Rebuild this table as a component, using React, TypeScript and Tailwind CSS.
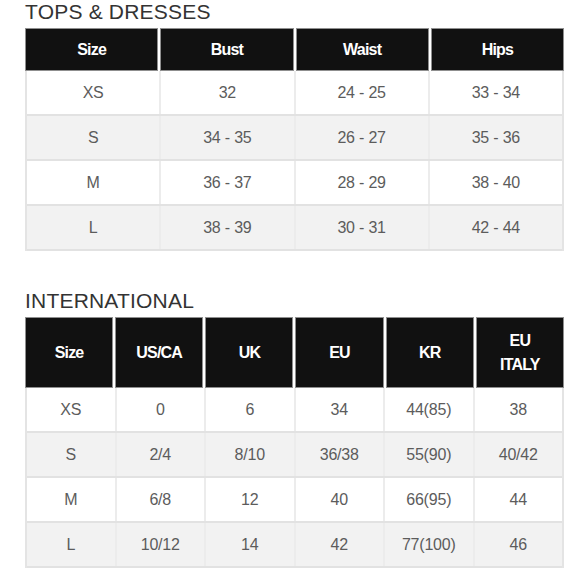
import React from 'react';

const tops = {
  head: ['Size', 'Bust', 'Waist', 'Hips'],
  rows: [
    ['XS', '32', '24 - 25', '33 - 34'],
    ['S', '34 - 35', '26 - 27', '35 - 36'],
    ['M', '36 - 37', '28 - 29', '38 - 40'],
    ['L', '38 - 39', '30 - 31', '42 - 44'],
  ],
};

const intl = {
  head: ['Size', 'US/CA', 'UK', 'EU', 'KR', 'EU\nITALY'],
  rows: [
    ['XS', '0', '6', '34', '44(85)', '38'],
    ['S', '2/4', '8/10', '36/38', '55(90)', '40/42'],
    ['M', '6/8', '12', '40', '66(95)', '44'],
    ['L', '10/12', '14', '42', '77(100)', '46'],
  ],
};

interface ChartProps {
  title: string;
  head: string[];
  rows: string[][];
  cols: string;
  headHeight: string;
}

const SizeChart = ({ title, head, rows, cols, headHeight }: ChartProps) => (
  <section>
    <h2 className="text-[21px] leading-[24px] text-[#333] tracking-[0.2px] mb-[4px]">{title}</h2>
    <div className={`grid ${cols} gap-[2px] bg-white`}>
      {head.map(h => (
        <div
          key={h}
          className={`${headHeight} flex items-center justify-center bg-[#111] border border-[#8f8f8f] text-white font-bold text-[16px] leading-[24px] tracking-[-0.8px] text-center whitespace-pre-line`}
        >
          {h}
        </div>
      ))}
    </div>
    <div className="border-x-2 border-[#e4e4e4]">
      {rows.map((row, i) => (
        <div
          key={row[0]}
          className={`grid ${cols} gap-[2px] bg-[#ececec] border-b-2 border-[#e2e2e2]`}
        >
          {row.map((cell, j) => (
            <div
              key={j}
              className={`h-[43px] flex items-center justify-center text-[16px] text-[#5c5c5c] tracking-[-0.2px] ${i % 2 ? 'bg-[#f2f2f2]' : 'bg-white'}`}
            >
              {cell}
            </div>
          ))}
        </div>
      ))}
    </div>
  </section>
);

export default function App() {
  return (
    <div className="w-[580px] h-[580px] bg-white pl-[25px]" style={{ fontFamily: '"Liberation Sans", Arial, sans-serif' }}>
      <div className="w-[539px] flex flex-col gap-[38px]">
        <SizeChart title="TOPS & DRESSES" head={tops.head} rows={tops.rows} cols="grid-cols-4" headHeight="h-[43px]" />
        <SizeChart title="INTERNATIONAL" head={intl.head} rows={intl.rows} cols="grid-cols-6" headHeight="h-[71px]" />
      </div>
    </div>
  );
}
